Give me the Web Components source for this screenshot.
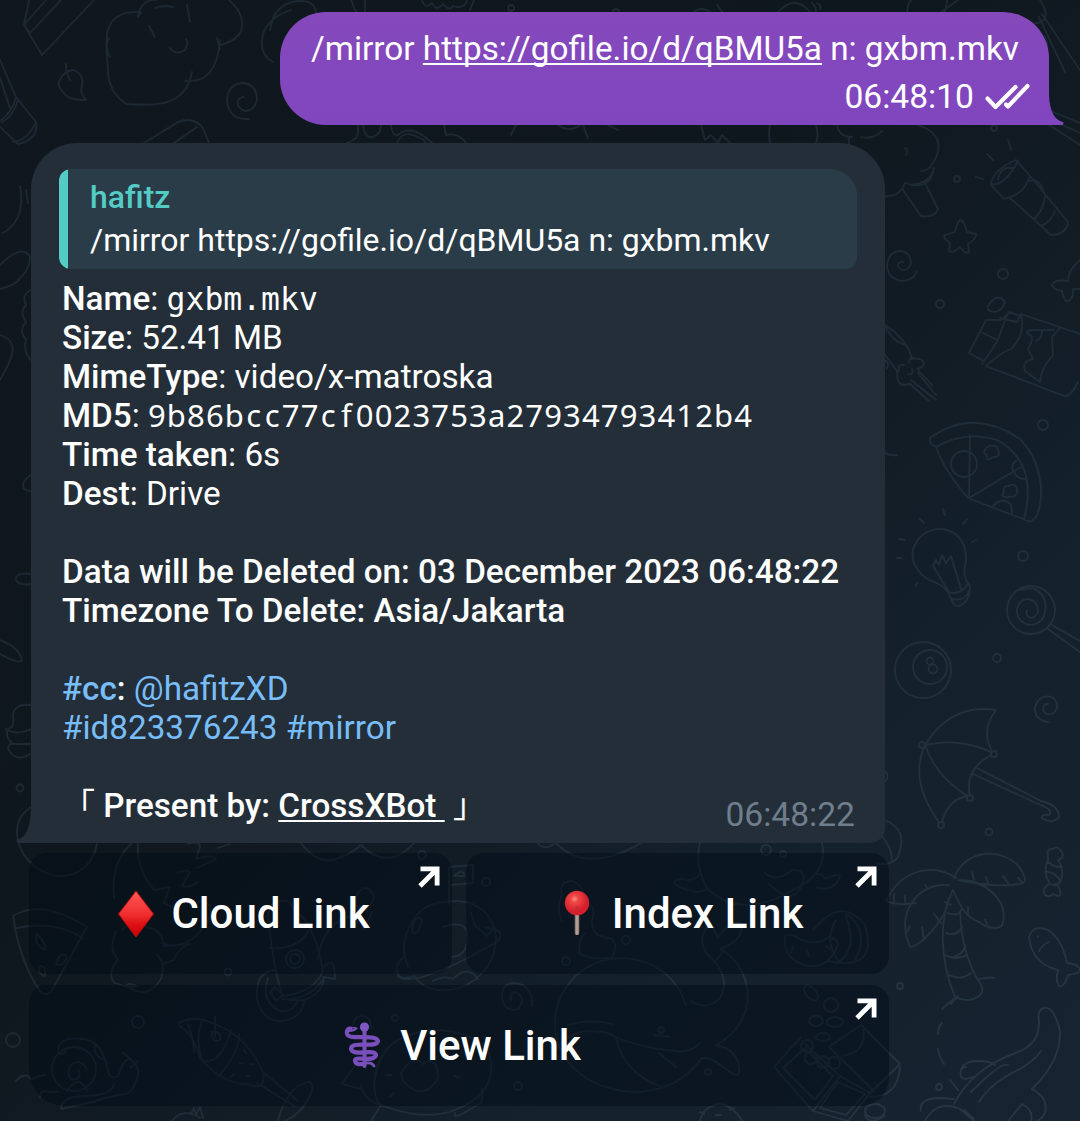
<!DOCTYPE html>
<html lang="en">
<head>
<meta charset="utf-8">
<title>Chat</title>
<style>
html,body{margin:0;height:1121px;overflow:hidden;background:#10181f}
body{width:1080px;font-family:Roboto,"Noto Sans",sans-serif;color:#fff}
b{font-weight:500}
</style>
</head>
<body>
<chat-screen>
  <out-message time="06:48:10">/mirror <u>https://gofile.io/d/qBMU5a</u> n: gxbm.mkv</out-message>
  <in-message time="06:48:22">
    <reply-quote slot="reply" author="hafitz">/mirror https://gofile.io/d/qBMU5a n: gxbm.mkv</reply-quote>
    <info-line label="Name"><mono-text>gxbm.mkv</mono-text></info-line>
    <info-line label="Size">52.41 MB</info-line>
    <info-line label="MimeType">video/x-matroska</info-line>
    <info-line label="MD5"><hash-text value="9b86bcc77cf0023753a27934793412b4"></hash-text></info-line>
    <info-line label="Time taken">6s</info-line>
    <info-line label="Dest">Drive</info-line>
    <text-line></text-line>
    <text-line strong>Data will be Deleted on: 03 December 2023 06:48:22</text-line>
    <text-line strong>Timezone To Delete: Asia/Jakarta</text-line>
    <text-line></text-line>
    <text-line><chat-link strong>#cc</chat-link><b>:</b> <chat-link>@hafitzXD</chat-link></text-line>
    <text-line><chat-link>#id823376243</chat-link> <chat-link>#mirror</chat-link></text-line>
    <text-line></text-line>
    <text-line strong><cjk-mark>「</cjk-mark> Present by: <u>CrossXBot&nbsp;</u> <cjk-mark>」</cjk-mark></text-line>
  </in-message>
  <button-row>
    <link-button><emoji-icon name="diamond" slot="icon"></emoji-icon>Cloud Link</link-button>
    <link-button><emoji-icon name="pin" slot="icon"></emoji-icon>Index Link</link-button>
  </button-row>
  <button-row last>
    <link-button><emoji-icon name="staff" slot="icon"></emoji-icon>View Link</link-button>
  </button-row>
</chat-screen>

<template id="doodles">
<style>:host{display:block;width:1080px;height:1121px}svg{display:block}</style>
<svg width="1080" height="1121" viewBox="0 0 1080 1121" fill="none" stroke-width="1.8" stroke-linecap="round" stroke-linejoin="round">
<defs>
<linearGradient id="bg" x1="0" y1="0" x2="1" y2="1"><stop offset="0" stop-color="#10171f"/><stop offset=".42" stop-color="#0f171e"/><stop offset=".72" stop-color="#14202a"/><stop offset="1" stop-color="#172331"/></linearGradient>
<linearGradient id="pen" gradientUnits="userSpaceOnUse" x1="0" y1="0" x2="1080" y2="1121"><stop offset="0" stop-color="#1e2833"/><stop offset=".45" stop-color="#1c2832"/><stop offset="1" stop-color="#263744"/></linearGradient>
</defs>
<rect width="1080" height="1121" fill="url(#bg)"/>
<g stroke="url(#pen)">
<!-- carton and pencil -->
<path d="M29 0 24 25 42 55 94 0M24 25l6 8L61 0M24 25 46 0M0 60l16 37 20 25q3 17-18 22L0 127M0 78l10 30M16 97q-4 16-16 24M18 100q-5 17-16 22M36 122q-8 18-23 20"/>
<!-- leaf -->
<path d="M66 64q0 10 4 16M60 80q4-9 13-10 13 4 8 20 1 6 5 10-18 1-24-9-6-8-2-11"/>
<!-- cloud -->
<path d="M138 17l3-5q-27-2-33 18-3 11 0 38-1 22 18 36 37 3 50-6 13-8 16-26M138 17q3-18 18-17M185 81q32 3 35-41M220 45q20-5 22-18 2-14-13-27M217 38q2 8 3 11M109 38q-5 8 1 19M149 26l6 11M155 8q8-3 18-1M187 5l3 17M170 48q6 8 15 2 4-7 1-11"/>
<!-- swirl -->
<path d="M249 119q-20 1-22-18 1-18 17-18 13 2 13 17-3 11-12 11-9-3-7-11 3-4 6-3"/>
<path d="M144 143l34-21q15-6 25 6l6 15M174 143l23-16M273 62q-15-8-10-28 6-17 28-24M270 30q4-27 28-29 17-1 18 12M351 0l5 12M365 0v12M422 0q3 10 10 3 4 9 11 1 7 8 10 2 10 4 14-5M470 10l4-10"/>
<circle cx="511" cy="8" r="3"/>
<path d="M358 125v9q-3 7-11 9M363 125q2 14 10 12 8-3 8-12M391 125q1 11 7 10 13-12 34 8M397 143q6-14 21-6 6 2 8 6M444 125l2 10q12-3 20 8M516 125l-5 10M558 125q11 8 22 0M583 125l5 13M608 125l10 5"/>
<circle cx="616" cy="12" r="3"/>
<path d="M694 12q8-6 16 0M717 5l6 8M778 12q17-18 32 0M812 3q4 4 4 8M817 3q5 3 3 6M701 125l4 15 6-5 7 8 4-8 8 8M770 143q-2-10 0-18M816 125q3 10 0 18M907 12q1-9 4-12M945 12l2-12M941 12l17-12M1040 0q9 14 4 20-10 7-20 0l2 20M1039 17l26 55M1042 14l38 56M1032 103q16 7 48 20M1033 112l47 21M1037 117l43 28M1046 60q3-15-1-24"/>
<!-- broccoli -->
<path d="M837 125q2 12 15 12M861 137q12 3 21-6M849 137v15M917 125q25 7 21 27-3 9-6 12-3 7-11 7M934 168q-3 15-23 17M934 168q-4 24-29 15M905 183q-6 15-21 13M903 190l18 26q14 2 17-7l-12-24M905 148q4 2 1 7"/>
<circle cx="994" cy="128" r="3"/><path d="M1008 140l3 10M987 154l6 6M976 177l7 2" /><circle cx="957" cy="179" r="3"/>
<!-- flashlight -->
<path d="M991 182q5-14 25-22l14 16q-6 19-26 23l-13-14zM991 184q13 3 27-23M998 180q2-14 15-12M1030 181q9-4 14 12M1009 197l42 38q15 0 17-13l-37-45M1045 197q-2 14-11 22M1055 211q-4 11-14 15"/>
<path d="M960 220q4 0 7 12l9 2q1 4-8 10l1 8q-3 3-9-5-8 7-11 4l1-8q-8-5-5-8l10-3q2-9 5-12"/>
<path d="M917 272q-5 9-15 9-14-2-15-15 1-14 13-15 11 1 11 13-3 7-9 6-5-3-4-6 2-3 5-2"/>
<circle cx="1003" cy="274" r="5"/><circle cx="940" cy="304" r="4"/>
<path d="M1080 260q-12 10-12 21-14-2-16 4 1 4 10 6 2 11 6 10 6-2 5-12h7"/>
<!-- candy bar -->
<path d="M988 306q6-10 13-8l4 4q-5 14-17 8zM986 320h15l9-8 10 4-3 6-17-4M986 320l-17 33 15 8M981 332l16 8M1007 315l-10 27-15 22M1021 314q5 20-10 35-10 3-25 17l78 30q7 1 14-14M1021 314l59 20M1060 328l-8 9 1 18q-12 13-13 27l-15-11q-3-10 8-12l-5-10q8-13 0-15-3-4 4-4h22M1042 331q0 8-6 10"/>
<!-- squid -->
<path d="M885 325q23 15 27 34 11-2 12 5-2 4-7 5l15 16M885 355l12 16q0 14 6 14l7-1 19 17M911 380l25 20M918 373l18 22M885 325q6 16 21 20M885 360q5 3 2 8M899 371q-2-7 5-6M908 374q6 1 4-5M909 362q1-6 5-4"/>
<!-- pizza -->
<path d="M930 438q43-31 90 1c20 20 25 51 18 74-5 11-10 9-15 6q-27-10-55-21-24-28-32-51-8-4-6-9M936 447q28-17 61-7c26 14 37 40 27 79M970 435l-1 63 52-31"/>
<circle cx="964" cy="464" r="13"/><path d="M993 506q10-10 18-1l1 8M1017 460q-8 6-2 14 4 5 10 5M985 450q4-7 12-3 5 11-4 10-8 6-6-2-4-1-2-5M1009 486q6-4 8 3 1 8-7 8-11 1-6-5-2-6 5-6"/>
<circle cx="1043" cy="425" r="5"/><path d="M885 453q4 3 12 2"/>
<!-- bulb -->
<path d="M948 592q-6-8-19-12-19-12-16-31 8-21 30-20 24 5 23 32-5 15 4 25 0 16-11 20-5 0-7-5zM948 592q12 4 20-8M951 599q14 3 18-8M933 566l16 26M951 556l10 33M933 566l3-6 3 5 3-10 4 8 5-7M943 509l2 6M967 519l-4 5M920 519l4 4M899 539l6 1M897 558h5M976 540l-4 2M917 583l-1 3"/>
<circle cx="1023" cy="556" r="5"/><circle cx="997" cy="658" r="4"/>
<!-- lollipop -->
<circle cx="1031" cy="610" r="24"/><path d="M1020 590c20-7 29 10 24 26-8 16-29 8-27-7 4-16 22-11 21 3-4 10-14 5-11-2M1052 625l28 16M1048 629l32 23"/>
<!-- eight ball -->
<circle cx="923" cy="670" r="28"/><circle cx="930" cy="667" r="17"/><circle cx="930" cy="661" r="3.5"/><circle cx="933" cy="669" r="4.5"/>
<path d="M1048 722q-14-2-13-15 4-13 17-10 9 7 2 16-10 4-11-5 1-4 5-4"/>
<!-- umbrella -->
<path d="M996 710q-45-7-71 35-17 36 16 80 7-28 29-29-6-29 24-42-15-22 2-44M925 745q36-8 68 8M925 745q11 32 44 52M977 768l64 33M973 774l63 29M1041 801q18 4 18 16-7 8-17 1-1-4 7-3 6-5-13-12"/>
<g fill="#15212b"><circle cx="922" cy="745" r="3"/><circle cx="994" cy="754" r="3"/><circle cx="970" cy="798" r="3"/><circle cx="941" cy="825" r="3"/></g>
<circle cx="989" cy="832" r="3.5"/>
<path d="M885 771q5 5 0 11M885 820q23 10 14 33-2 12-21 11M882 836q11 14 10 26"/>
<!-- palm -->
<path d="M954 878c12-31 50-30 66-10q8 13 3 15-24 6-64-3M956 878c-22-15-54-10-70 23q11 5 30 2M949 885q-30-2-42 27-5 16 3 35 14-2 35-34M959 880c26 0 49 20 44 42 0 8-13 8-24 0-13-5-18-14-26-32-14 26-14 69 2 107q14 7 25-2 5-5 0-12-18-27-20-71"/>
<path d="M948 913q10 4 13-3M946 933q11 4 16-6M945 955q11 6 22 0M949 975q12 6 22-2M954 957q10-4 11-11M955 998l-13 11M958 996l-7 8M980 979q8-2 14-1M942 1023q-4 4-4 11M938 1049q1 8 6 15M950 1080l8 10M910 926l-3 6M922 927l2 13M934 914l7 9M945 902l6 3M968 907v8M985 920l2 4M894 894v8M905 896v6M925 885l3 4M972 872l2 8M986 877l2 6M1003 876l5 7M1018 878l4 4"/>
<circle cx="900" cy="986" r="3"/><circle cx="939" cy="1087" r="3"/>
<!-- candy -->
<path d="M1048 857q-2-9 5-8 4-4 8 2 5 6-3 9 7 10 3 20-4 8-11 4-8-12-2-24zM1049 884q-8 5-4 11 5 3 8-1 9 5 7-3-1-6-5-7M1048 862q6 5 12 5M1046 872q7-1 14 8"/>
<!-- fish -->
<path d="M1029 937q4-13 19-7 14 9 19 33 11 1 13 6 0 5-12 6-4 13-9 11-4-6-1-16-26-6-29-33M1039 951q3-6 10-9M1038 936v1"/>
<!-- crocodile -->
<path d="M954 1104q18-36 64-52 22-8 21-32-2-12 6-12 9-1 15 23 1 30-28 58 17 9 13 24-3 6-8 8M971 1092q31-31 37-27M979 1102q12-20 41-33 16-10 21-18M961 1077q-3-16 17-16 13 0 17 4M961 1077q4 3 8 1l6-1M966 1067q-4 0-5 4M921 1111q-3-13 20-13l13 1M925 1121q12-22 35-12l14 12M1008 1121l14-17q12 6 9 17M964 1110l10 9"/>
<ellipse cx="875" cy="1111" rx="10" ry="7"/><path d="M865 1115q4 11 20 1"/>
<!-- left margin -->
<path d="M20 186q6 34-17 47M26 190l2 13M0 265q22-22 30-8 0 13-12 23M0 289q13-3 19-9M31 290q-10 5-5 15-7 7 0 17-8 9 0 17-3 14 5 21M0 335q20 5 8 30l-8 15M31 475q-8 5-8 11 1 5 8 5M0 640q20 8 22 20-2 5-22-6M31 705q-18-2-18 12 2 10-5 12-3 9 4 14-8 4 0 11 6 7 18 0M6 729q10 7 25 0M10 744h21"/>
<circle cx="20" cy="788" r="3.5"/><circle cx="13" cy="1040" r="7"/>
<path d="M31 574q-16-2-15 6 4 6 15 4"/>
<!-- behind buttons -->
<path d="M31 807q-18 12-13 34c5 20 25 36 45 35q28-3 34-32M13 916q28-18 74 11l-36 65q-6 5-11-1-20-28-27-75M17 928q37-8 66 10M37 934q10 10 8 16-12-6-8-16M58 958q6-7 9 0-4 8-11 7zM40 966q7 0 5 10-8-2-5-10"/>
<path d="M132 843q-22 20-18 55M138 843q-2 26 16 47l16-3-6 16 8 4M188 844q12-4 12 3l-4 12q16-5 20 0l-19 9M218 848l12-4M178 872q10-3 12 0l-8 14q8 2 16-4M165 944q25 7 45-26 3-19-12-16M116 931q-8 19 2 28-12 16-3 24 15 6 22 3-10-4-10 0 20 15 34-7 5-17-4-24M122 930q14-13 26-2 13 0 16 18l26-2q-12 4-16 16l-12 4"/>
<path d="M301 843q15 20 32 17 17-5 28-15 27 27 53-2M556 843q31 32 87-1M538 843q5 8 16 1"/>
<!-- astronaut -->
<path d="M268 916q2-16 12-15 12-2 14 10 19 8 29 59-7 22-40 26-9-22-15-80M270 948q28 2 38-17M318 959q5-39 40-45M324 967q11-13 11 12l-12-2M282 999q27 2 42-21M289 1000h15q15-4 20-19M276 970q-21 1-19 28 4 23 24 23 22-3 23-20M268 978q-8 23 12 33 13 2 18-11M275 987l8 8-7 6-6-9zM358 893q5-8 12-3 8 8-2 17-14 4-12-8zM360 910l-6 18 6-8 4 10 8-18"/>
<circle cx="295" cy="959" r="9"/><circle cx="295" cy="959" r="5"/><circle cx="228" cy="972" r="3.5"/><circle cx="422" cy="855" r="4"/>
<!-- planet -->
<path d="M449 904v-37l24-2v18l-24 2M454 876q10-9 10 0zM408 966c-11-23 3-56 28-63q53-10 60 34-1 36-36 51-32 8-46-12-18 6-17-8 0-5 7-11M398 976q15 14 99-34 10-13-11-14M433 981q12-6 20-2 14-15 25 0M471 913l4 13 12 10 7-8M443 927q24-8 24 8 2 20-15 22M415 920q5-4 7 0-3 15-9 13-2-6 2-13"/>
<circle cx="486" cy="882" r="4"/><circle cx="566" cy="961" r="4"/><circle cx="626" cy="940" r="4"/>
<path d="M562 895q-4-14 10-14 10 3 11 13M562 894q-6 16 0 27M590 905q6 4 2 15-1 17 18 18 9 4 2 20-24 2-33-5 0-15 6-20"/>
<!-- monster -->
<path d="M700 843q-6 22 7 45-4 5-15 3-23-6-16-11 7-2 11 0 8 0 12-5M707 888q33 33 86 2 36-17 29-47M765 873q12 10 27-3 18-1 8 19-10 16-31-5M817 874q5-1 8 5 15-7 15-2-6 15-23 11"/><circle cx="766" cy="850" r="5"/><circle cx="783" cy="854" r="3"/>
<path d="M785 940q-2-8 9-4 21 12 35 1 9 2 9 7-8 24-30 22-24-6-23-26M813 930q29-35 52-5 14 47-38 36M836 920q-13 20 3 42 19-14 7-46M846 914q25 16 9 47M793 946l-2 7M807 950l2 6M826 946l4 3"/>
<!-- whale -->
<path d="M686 1006c-17-60-107-68-129 1-12 50 30 86 83 85 28-3 44-11 62-34 16-2 32 24 37 15 1-17-8-25-23-28 45-24 38-78 4-96q25-9 21-26-11-4-23 15-7-19-13-8-9 15 9 31c23 25 3 56-24 40M715 961l7-8M556 1050q17-25 51-17 30 15 70 18 13 2 23-8M568 1025q22-7 45-1M616 1038q8 35 44 48M659 1053l17 14M654 1035l16 2"/><circle cx="661" cy="1030" r="3" fill="#1b2935"/>
<path d="M532 1006q1-22-19-23-12 1-11 15 3 15 16 11 9-12-3-17-6 1-4 8"/>
<!-- snail -->
<circle cx="74" cy="1069" r="22"/>
<path d="M58 1050q2-14 25-11 20 2 25 33 3 8 10 4l4-9q3-9 9-8l-9-7M130 1068l8-7M131 1060q12 9 4 23-4 12-12 11-20 4-30 8l-32 7q0-12 21-13 30 0 32-12M67 1091q12-18 20 0M58 1054q9 1 8-6M95 1044q-2 12 8 15M87 1070q-4-11-15-6-8 10 1 16 10-2 5-10M16 1081q9-10 15-2 7-3 14-4M40 1097q0-8 10-5h8"/>
<circle cx="138" cy="1022" r="6"/><circle cx="395" cy="1018" r="3"/><circle cx="518" cy="1086" r="4"/><circle cx="708" cy="1072" r="3"/>
<!-- ice cream -->
<path d="M178 1023q17-8 31-1 36 11 54 50 3 20-15 12-25 1-48-26-7-25-22-33M188 1024q5 14 6 28M202 1022q-7 15 0 38M215 1017v20M231 1030q-10 35-28 31M239 1034q1 17-20 42M212 1032q10-2 8 8-9 4-8-8M263 1072l35 29M257 1083l37 23M278 1121q8-33 30-39 8 0 2 14-9 18-25 25M244 1050l2 3M240 1063h3M250 1064h4M230 1077l4-3M246 1076h3"/>
<!-- dinosaur -->
<path d="M353 1025q4-14 16-6l3 9M356 1064l-14 20 20 5M376 1075q5-40 57-45 35 0 55 19 14 43-33 61-31 12-74-5-11-10-4-40M361 1085q4 17 20 20l-10 16M401 1073q12-19 22-9 14-10 15 14-14 25-35 3zM386 1075h6M394 1093l-4 4M454 1076l6 1M455 1113q-2 6 9 0l18-11v-13M172 1121q11-14 28-3M191 1114l3-6 2 7 4-8 3 11"/>
<path d="M700 1121q3-15 20-17 14 2 22 17M700 1112l4 2M730 1110l4-2M716 1115h5"/>
<!-- coin box -->
<path d="M774 1067l27-30M813 1111l-39-44M813 1111l27-35-35-32M813 1111l35 10 22-28-30-17M870 1093l30-29-39-39-32 22 45 44M815 1100l-32-32 22-20 28 28zM820 1108l18-26 27 12-19 21zM863 1026q5 26-20 30M870 1097q28 0 30-30"/>
<ellipse cx="811" cy="993" rx="5" ry="9" transform="rotate(-40 811 993)"/><circle cx="831" cy="1005" r="7"/><ellipse cx="816" cy="1021" rx="7" ry="5"/><ellipse cx="835" cy="1022" rx="8" ry="5"/><ellipse cx="823" cy="1037" rx="7" ry="4"/><circle cx="807" cy="1046" r="6"/><circle cx="811" cy="1058" r="6"/><circle cx="823" cy="1062" r="6"/><circle cx="834" cy="1063" r="6"/>
</g>
</svg>
</template>

<script>
const define = (name, markup) => customElements.define(name, class extends HTMLElement {
  constructor() {
    super();
    this.attachShadow({ mode: 'open' }).innerHTML = typeof markup === 'function' ? markup(this) : markup;
  }
});

customElements.define('chat-wallpaper', class extends HTMLElement {
  constructor() {
    super();
    this.attachShadow({ mode: 'open' }).append(document.getElementById('doodles').content.cloneNode(true));
  }
});

define('chat-screen', `<style>
:host{display:block;position:relative;width:1080px;height:1121px;overflow:hidden}
chat-wallpaper{position:absolute;inset:0}
main{position:relative;display:flex;flex-direction:column;padding-top:12px}
</style><chat-wallpaper></chat-wallpaper><main><slot></slot></main>`);

define('out-message', el => `<style>
:host{display:block;position:relative;align-self:flex-end;margin-right:31px;width:769px;height:113px;box-sizing:border-box;
padding:14px 31px 0;background:linear-gradient(#8549bc,#8046be);border-radius:46px 46px 0 46px;font-size:33.3px;line-height:46px;white-space:nowrap}
.tail{position:absolute;right:-15px;bottom:0}
::slotted(u){text-decoration-thickness:2px;text-underline-offset:3px;text-decoration-skip-ink:none}
.meta{display:flex;justify-content:flex-end;align-items:center;gap:11px;margin-right:-12px;line-height:49px;font-size:33.6px}
</style><div><slot></slot></div><div class="meta"><span>${el.getAttribute('time')}</span>
<svg width="45" height="28" viewBox="0 0 45 28" fill="none" stroke="#fff" stroke-width="4.1" stroke-linecap="round"><path d="M2.5 15.500 10.500 24M10.500 24 30.500 4M21 21.500 23 23.500M23 23.500 42.500 3"/></svg></div>
<svg class="tail" width="16" height="44" viewBox="0 0 16 44"><path d="M0 0H1V14Q2 38 15 41Q16.500 43 14 44H0Z" fill="#8046be"/></svg>`);

define('in-message', el => `<style>
:host{display:block;position:relative;margin:18px 0 0 31px;width:854px;height:700px;box-sizing:border-box;padding:26px 28px 0;background:#232e39;border-radius:46px 46px 15px 0;font-size:33.25px;line-height:39px}
.body{padding:10px 0 0 3px}
.time{position:absolute;right:30px;bottom:9px;color:#6f7e8d;font-size:33.6px}
.tail{position:absolute;left:-15px;bottom:0}
</style><slot name="reply"></slot><div class="body"><slot></slot></div><span class="time">${el.getAttribute('time')}</span>
<svg class="tail" width="16" height="44" viewBox="0 0 16 44"><path d="M16 0H15V10Q14 38 1 41Q0 43.500 2 44H16Z" fill="#232e39"/></svg>`);

define('reply-quote', el => `<style>
:host{display:block;box-sizing:border-box;width:798px;height:100px;border-radius:12px 27px 12px 12px;overflow:hidden;background:linear-gradient(90deg,#54cbc5 9px,#2a3c48 9px);padding:7px 0 0 31px;font-size:31.97px;line-height:43px;white-space:nowrap}
b{display:block;font-weight:500;color:#54cbc5}
</style><b>${el.getAttribute('author')}</b><div><slot></slot></div>`);

define('info-line', el => `<style>:host{display:block;height:39px;white-space:nowrap}b{font-weight:500}</style><b>${el.getAttribute('label')}</b>: <slot></slot>`);
define('text-line', `<style>:host{display:block;height:39px;white-space:nowrap}:host([strong]){font-weight:500}
::slotted(u){text-decoration-thickness:2px;text-underline-offset:3px;text-decoration-skip-ink:none}</style><slot></slot>`);
define('chat-link', `<style>:host{color:#78bdf7}:host([strong]){font-weight:500}</style><slot></slot>`);
define('cjk-mark', `<style>:host{font-family:"Noto Sans CJK JP",sans-serif;font-size:33px;font-weight:400;line-height:0}</style><slot></slot>`);
define('mono-text', `<style>:host{font-family:"DejaVu Sans Mono",monospace;font-size:31.4px;line-height:0}</style><slot></slot>`);
define('hash-text', el => `<style>:host{font-family:"Noto Sans",sans-serif;font-size:31px;line-height:0;letter-spacing:1.14px;font-kerning:none}
.c{padding:0 1.2px}.f{padding:0 3px}</style><span>${el.getAttribute('value').replace(/[cf]/g, c => `<span class="${c}">${c}</span>`)}</span>`);

define('button-row', `<style>:host{display:flex;gap:14px;width:860px;height:121px;margin:10px 0 0 29px}
:host([last]){margin-top:11px;--bl:36px;--br:28px;--nudge:3px}</style><slot></slot>`);
define('link-button', `<style>
:host{position:relative;flex:1;display:flex;align-items:center;justify-content:center;gap:10px;font-size:42px;font-weight:500;
background:rgba(0,11,22,.46);border-radius:18px 18px var(--br,18px) var(--bl,18px);white-space:nowrap;padding:0 0 1px var(--nudge,0);box-sizing:border-box}
.arrow{position:absolute;right:12px;top:13px}
</style><slot name="icon"></slot><span><slot></slot></span>
<svg class="arrow" width="22" height="22" viewBox="0 0 22 22" fill="none" stroke="#fff" stroke-width="4.8"><path d="M2.500 2.900H19.100V19.500M18.500 3.500 2 20"/></svg>`);

const glyphs = {
  diamond: `<defs><linearGradient id="r" x1="0" y1="0" x2="0" y2="1"><stop stop-color="#ff5a58"/><stop offset=".5" stop-color="#ef2f30"/><stop offset=".75" stop-color="#dc0f12"/><stop offset="1" stop-color="#c40005"/></linearGradient></defs>
<path d="M25 3 42.500 26 25 49 7.500 26Z" fill="url(#r)" stroke="#b80d10" stroke-width="1" stroke-linejoin="round"/>`,
  pin: `<defs><radialGradient id="p" cx=".4" cy=".34"><stop stop-color="#ff8d85"/><stop offset=".3" stop-color="#ef4745"/><stop offset="1" stop-color="#d51f2d"/></radialGradient><linearGradient id="s"><stop stop-color="#756865"/><stop offset=".5" stop-color="#c5aaa3"/><stop offset="1" stop-color="#7b6864"/></linearGradient></defs>
<rect x="22.700" y="16" width="4.600" height="31" rx="2" fill="url(#s)"/><circle cx="25" cy="15" r="12.200" fill="url(#p)"/><path d="M23.500 18h3v8h-3z" fill="#b7272b" opacity=".5"/>`,
  staff: `<g transform="translate(-1 1)"><g fill="none" stroke="#7950bb" stroke-linecap="round"><path d="M25.500 6V45" stroke-width="4"/><path d="M14 8Q7 6 8 13C10 20 37 12 39 20C38 28 12 19 12 28C14 36 36 27 37 34C35 42 15 34 16 40Q17 44 23 43" stroke-width="4.200"/><path d="M27 42q6-1 8 3" stroke-width="2.800"/></g><circle cx="25.500" cy="6" r="4.600" fill="#8057c4"/><path d="M8 9q4-5 11-2-3 4-9 4z" fill="#7950bb"/><circle cx="14" cy="7.500" r=".8" fill="#201538"/></g>`
};
define('emoji-icon', el => `<style>:host{display:block;width:50px;height:50px}svg{display:block}</style><svg width="50" height="50" viewBox="0 0 50 50">${glyphs[el.getAttribute('name')]}</svg>`);
</script>
</body>
</html>
